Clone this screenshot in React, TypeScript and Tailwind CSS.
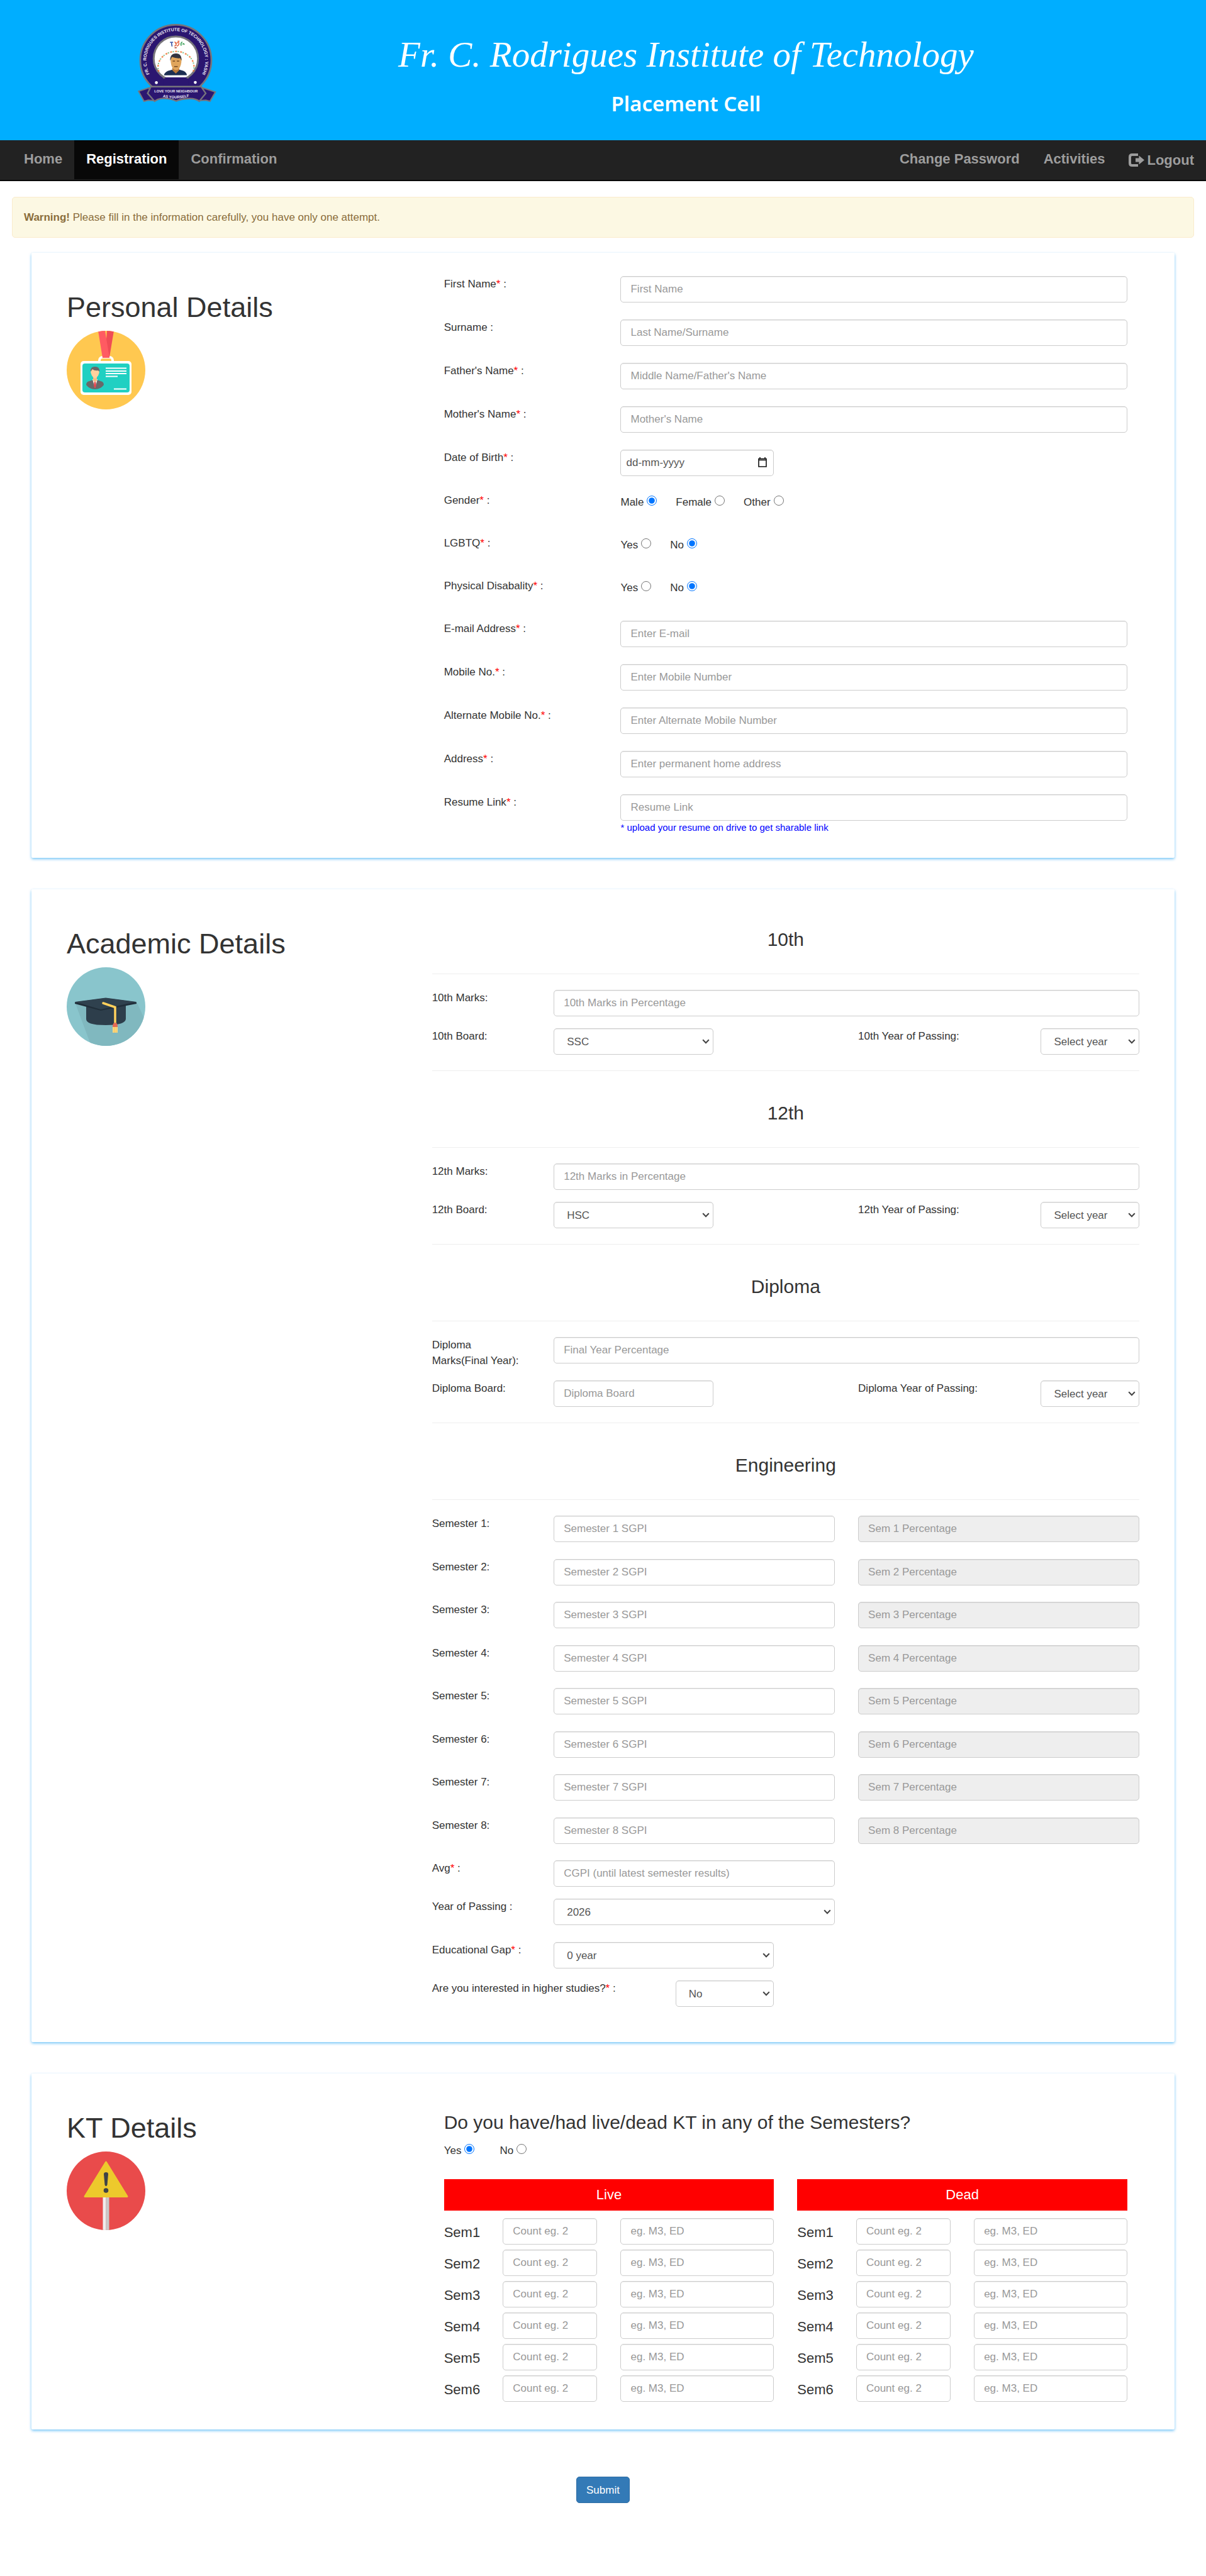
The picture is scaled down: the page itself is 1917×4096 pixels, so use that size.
import type { ReactNode } from "react";

const CONTROL =
  "block h-[42px] w-full rounded-[5px] border border-[#cccccc] bg-white px-[15px] text-[17px] leading-[25px] text-[#555555] shadow-[inset_0_1px_1px_rgba(0,0,0,0.075)] outline-none placeholder:text-[#999999] disabled:bg-[#eeeeee]";

function Req() {
  return <span className="text-[#ff0000]">*</span>;
}

function TextInput({ id, placeholder, label, disabled }: { id?: string; placeholder: string; label?: string; disabled?: boolean }) {
  return <input id={id} type="text" aria-label={label} placeholder={placeholder} disabled={disabled} className={CONTROL} />;
}

function Select({ id, options }: { id: string; options: string[] }) {
  return (
    <div className="relative">
      <select id={id} className="block h-[42px] w-full appearance-none rounded-[5px] border border-[#cccccc] bg-white pr-[28px] pl-5 text-[17px] leading-[25px] text-[#555555] shadow-[inset_0_1px_1px_rgba(0,0,0,0.075)] outline-none">
        {options.map((o) => (
          <option key={o}>{o}</option>
        ))}
      </select>
      <svg viewBox="0 0 12 8" className="pointer-events-none absolute top-[17px] right-[6px] h-2 w-3" fill="none" stroke="#444444" strokeWidth="2">
        <path d="M1.2 1.2 6 6.2l4.8-5" />
      </svg>
    </div>
  );
}

function Radios({ name, options, checked, gap }: { name: string; options: string[]; checked: string; gap: string }) {
  return (
    <div className={`flex ${gap}`}>
      {options.map((o) => (
        <label key={o} className="flex items-start gap-[5px]">
          <span>{o}</span>
          <input type="radio" name={name} defaultChecked={o === checked} className="m-0 mt-[2px] h-4 w-4 accent-[#0075ff]" />
        </label>
      ))}
    </div>
  );
}

function Logo() {
  return (
    <svg viewBox="57 52 376 376" className="h-[125px] w-[125px]" role="img" aria-label="Institute crest">
      <defs>
        <path id="crest-arc" d="M123 307 A141 141 0 1 1 355 307" />
        <path id="crest-motto" d="M176 402 Q239 416 304 400" />
      </defs>
      <circle cx="239" cy="226" r="170" fill="#2b1670" stroke="#77757c" strokeWidth="8" />
      <circle cx="239" cy="218" r="106" fill="#ffffff" stroke="#77757c" strokeWidth="9" />
      <path d="M178 308h122v40H178z" fill="#2b1670" />
      <path d="M178 310l10-2M300 310l-10-2" stroke="#77757c" strokeWidth="7" />
      <path d="M158 280a86 74 0 1 1 164 0" fill="none" stroke="#f0702f" strokeWidth="7" strokeDasharray="9 15" opacity="0.8" />
      <path d="M158 280a86 74 0 1 1 164 0" fill="none" stroke="#4faa5c" strokeWidth="6" strokeDasharray="6 18" strokeDashoffset="-12" opacity="0.7" />
      <path d="M182 298q5-20 30-24l28-8 26 8q22 4 26 23z" fill="#1d2f52" />
      <path d="M222 262v12l17 16 16-16v-12z" fill="#b97838" />
      <path d="M214 222q0-24 26-24t26 24q0 30-12 44-14 14-28 0-12-14-12-44z" fill="#e0a55c" />
      <path d="M212 228q-2-34 28-35 28 1 26 35l-6-12q-20 2-40-6z" fill="#33343f" />
      <path d="M224 230h11M244 230h11M231 256h17" stroke="#5e3717" strokeWidth="4" />
      <path d="M211 140h15m-8 0 3 20" stroke="#3a55a8" strokeWidth="5" fill="none" />
      <path d="M232 139q10 0 6 8 8 8-6 11m10-12q10-12 12-2 0 12-10 14m4-25q4 4 8 0" stroke="#e2552f" strokeWidth="4" fill="none" />
      <path d="M270 138q-10 6-5 18m6-6q6-8 8 2" stroke="#3da05a" strokeWidth="5" fill="none" />
      <path d="M233 166h10" stroke="#b04b3a" strokeWidth="5" />
      <circle cx="146" cy="333" r="7" fill="#ffffff" />
      <circle cx="332" cy="332" r="7" fill="#ffffff" />
      <path d="M110 358 61 374l26 48 20-5 30 2zM368 358l60 20-26 44-20-5-30 2z" fill="#2b1670" stroke="#77757c" strokeWidth="6" />
      <path d="M120 352h240l22 32-31 38q-20-16-60-12-30 2-50 11-24-12-58-13-26 0-46 14l-33-38z" fill="#2b1670" stroke="#77757c" strokeWidth="7" />
      <g fill="#eceaf5" fontFamily="Liberation Sans" fontWeight="700">
        <text fontSize="21">
          <textPath href="#crest-arc" startOffset="50%" textAnchor="middle">
            FR. C. RODRIGUES INSTITUTE OF TECHNOLOGY : VASHI
          </textPath>
        </text>
        <text x="240" y="381" fontSize="17" textAnchor="middle">
          LOVE YOUR NEIGHBOUR
        </text>
        <text fontSize="18">
          <textPath href="#crest-motto" startOffset="50%" textAnchor="middle">
            AS YOURSELF
          </textPath>
        </text>
      </g>
    </svg>
  );
}

function BadgeIcon() {
  return (
    <svg viewBox="0 0 125 125" className="h-[125px] w-[125px]" aria-hidden="true">
      <defs>
        <clipPath id="badge-clip">
          <circle cx="62.5" cy="62.5" r="62.5" />
        </clipPath>
      </defs>
      <g clipPath="url(#badge-clip)">
        <path d="M0 0h125v125H0z" fill="#ffc850" />
        <rect x="52" y="42" width="21" height="16" rx="5" fill="none" stroke="#ffffff" strokeWidth="4" />
        <path d="M64 0h11l-7 42h-7z" fill="#f04c55" />
        <path d="M50 0h11l7 43H57z" fill="#ff5b62" />
        <rect x="22" y="48" width="81" height="54" rx="5" fill="#ffffff" />
        <rect x="25" y="52" width="75" height="46" rx="4" fill="#20d0c2" />
        <path d="M62 59.5h33M62 64h33M62 68h33M62 72.5h19M75 92.5h20" stroke="#ffffff" strokeWidth="2" />
        <path d="M31 86q0-5 5-6l9-3 9 3q5 1 5 6-5 7-14 7t-14-7z" fill="#696969" />
        <path d="m41 77 4 14 4-14z" fill="#ffffff" />
        <path d="m44 79-1 9 2 3 2-3-1-9z" fill="#e4474f" />
        <path d="M42 73h6v6l-3 3-3-3z" fill="#f3bd83" />
        <path d="M38 63q0-5 7-5t7 5q0 9-7 13-7-4-7-13z" fill="#ffd19d" />
        <path d="M38 65q-1-8 7-8t7 8l-2-2q-6 1-9-2z" fill="#696969" />
      </g>
    </svg>
  );
}

function CapIcon() {
  return (
    <svg viewBox="0 0 125 125" className="h-[125px] w-[125px]" aria-hidden="true">
      <defs>
        <clipPath id="cap-clip">
          <circle cx="62.5" cy="62.5" r="62.5" />
        </clipPath>
      </defs>
      <g clipPath="url(#cap-clip)">
        <path d="M0 0h125v125H0z" fill="#89c5cc" />
        <path d="M14 58 39 125h86V85l-13-28z" fill="#80b8bf" />
        <path d="M31 58h63v24q0 10-32 10T31 82z" fill="#2d3e4b" />
        <path d="M13 55.5 62 49l49 6.5v2.5L54 69 13 58z" fill="#202e39" />
        <path d="M13 55 62 48.5 111 55 54 67z" fill="#2f414e" />
        <path d="m58 57 19 6.5V90" fill="none" stroke="#ffd15c" strokeWidth="3.5" strokeLinecap="round" />
        <path d="M73 95q0-7 4-7t4 7z" fill="#e36a55" />
        <path d="M73 95h8v9h-8z" fill="#ffd980" />
        <path d="M75.5 95v9M78.5 95v9" stroke="#f3c05a" />
      </g>
    </svg>
  );
}

function WarningIcon() {
  return (
    <svg viewBox="0 0 125 125" className="h-[125px] w-[125px]" aria-hidden="true">
      <defs>
        <clipPath id="warn-clip">
          <circle cx="62.5" cy="62.5" r="62.5" />
        </clipPath>
      </defs>
      <g clipPath="url(#warn-clip)">
        <path d="M0 0h125v125H0z" fill="#e94b4b" />
        <path d="M57.5 70h5v55h-5z" fill="#eeeeee" />
        <path d="M62.5 70h5v55h-5z" fill="#c9c9c9" />
        <path d="M62.5 17 96 71.5H29z" fill="#edc92c" stroke="#edc92c" strokeWidth="3" strokeLinejoin="round" />
        <path d="M59 36q0-3 3.5-3t3.5 3l-1.5 17q-.5 2-2 2t-2-2z" fill="#3e4347" />
        <circle cx="62.5" cy="62" r="3.8" fill="#3e4347" />
      </g>
    </svg>
  );
}

function Card({ title, icon, children }: { title: string; icon: ReactNode; children: ReactNode }) {
  return (
    <section className="mx-[50px] grid grid-cols-12 gap-x-[37px] rounded-[2px] bg-white px-14 shadow-[0_2px_4px_rgba(0,150,240,0.55)]">
      <div className="col-span-4 pt-[62px]">
        <h1 className="mb-3 text-[45px] leading-[50px]">{title}</h1>
        {icon}
      </div>
      <div className="col-span-8">{children}</div>
    </section>
  );
}

function PersonalRow({ id, label, required = true, placeholder }: { id: string; label: string; required?: boolean; placeholder: string }) {
  return (
    <div className="grid grid-cols-12 gap-x-[37px]">
      <label htmlFor={id} className="col-span-3">
        {label}
        {required && <Req />} :
      </label>
      <div className="col-span-9">
        <TextInput id={id} placeholder={placeholder} />
      </div>
    </div>
  );
}

function RadioRow({ label, name, options, checked }: { label: string; name: string; options: string[]; checked: string }) {
  return (
    <div role="radiogroup" aria-label={label} className="grid h-[41px] grid-cols-12 gap-x-[37px]">
      <span className="col-span-3">
        {label}
        <Req /> :
      </span>
      <div className="col-span-9 pt-[3px]">
        <Radios name={name} options={options} checked={checked} gap="gap-[30px]" />
      </div>
    </div>
  );
}

function Rule() {
  return <hr className="border-0 border-t border-[#eeeeee]" />;
}

function SchoolSection({ title, prefix, marksLabel, marksPlaceholder, board }: { title: string; prefix: string; marksLabel: ReactNode; marksPlaceholder: string; board: ReactNode }) {
  return (
    <>
      <h3 className="mb-[38px] text-center text-[30px] leading-[33px]">{title}</h3>
      <Rule />
      <div className="my-[25px] grid grid-cols-12 gap-x-[37px] gap-y-[19px]">
        <label htmlFor={`${prefix}-marks`} className="col-span-2">
          {marksLabel}
        </label>
        <div className="col-span-10">
          <TextInput id={`${prefix}-marks`} placeholder={marksPlaceholder} />
        </div>
        <label htmlFor={`${prefix}-board`} className="col-span-2">
          {prefix} Board:
        </label>
        <div className="col-span-3">{board}</div>
        <label htmlFor={`${prefix}-year`} className="col-span-3 col-start-8">
          {prefix} Year of Passing:
        </label>
        <div className="col-span-2">
          <Select id={`${prefix}-year`} options={["Select year", "2018", "2019", "2020", "2021", "2022"]} />
        </div>
      </div>
      <Rule />
      <div className="h-[50px]" />
    </>
  );
}

function KtTable({ title }: { title: string }) {
  return (
    <div className="col-span-6">
      <h4 className="mb-3 bg-[#ff0000] text-center text-[22px] leading-[50px] text-white">{title}</h4>
      <div className="flex flex-col gap-2">
        {[1, 2, 3, 4, 5, 6].map((n) => (
          <div key={n} className="grid grid-cols-12 gap-x-[37px]">
            <h4 className="col-span-2 pt-[10px] text-[22px] leading-[25px] whitespace-nowrap">Sem{n}</h4>
            <div className="col-span-4">
              <TextInput label={`${title} KT count, semester ${n}`} placeholder="Count eg. 2" />
            </div>
            <div className="col-span-6">
              <TextInput label={`${title} KT subjects, semester ${n}`} placeholder="eg. M3, ED" />
            </div>
          </div>
        ))}
      </div>
    </div>
  );
}

const NAV = "block px-[19px] pt-[17px] pb-[20px] leading-[25px] whitespace-nowrap";

export default function App() {
  return (
    <div className="bg-white pb-[116px] font-['Liberation_Sans',Arial,sans-serif] text-[17px] leading-[25px] text-[#333333]">
      <header className="grid grid-cols-[564fr_1054fr_300fr] bg-[#00aeff] text-white">
        <div className="flex justify-center pt-[38px] pb-[60px]">
          <Logo />
        </div>
        <div className="pt-[49px] text-center whitespace-nowrap">
          <div className="font-['Liberation_Serif',serif] text-[57px] leading-[75px] italic">Fr. C. Rodrigues Institute of Technology</div>
          <div className="mt-[18px] font-['Noto_Sans',sans-serif] text-[33px] leading-[46px] font-semibold">Placement Cell</div>
        </div>
      </header>

      <nav className="flex justify-between border-b-2 border-[#080808] bg-[#222222] pb-px pl-[19px] text-[22px] font-bold text-[#9d9d9d]">
        <ul className="flex">
          <li><a href="#home" className={NAV}>Home</a></li>
          <li><a href="#registration" aria-current="page" className={`${NAV} bg-[#080808] text-white`}>Registration</a></li>
          <li><a href="#confirmation" className={NAV}>Confirmation</a></li>
        </ul>
        <ul className="flex">
          <li><a href="#password" className={NAV}>Change Password</a></li>
          <li><a href="#activities" className={NAV}>Activities</a></li>
          <li>
            <a href="#logout" className="flex items-center gap-1 px-[19px] pt-[19px] pb-[18px] leading-[25px]">
              <svg viewBox="0 0 25 21" className="h-[21px] w-[25px]" aria-hidden="true">
                <path d="M15 2H5.500Q2 2 2 5.500v10Q2 19 5.500 19H15" fill="none" stroke="currentColor" strokeWidth="4" />
                <path d="M11 7.500H16.500V3.500l8.500 7-8.500 7V13.500H11z" fill="currentColor" />
              </svg>
              Logout
            </a>
          </li>
        </ul>
      </nav>

      <div role="alert" className="mx-[19px] mt-[25px] rounded-[5px] border border-[#faebcc] bg-[#fcf8e3] px-[18px] py-[19px] text-[#8a6d3b]">
        <strong>Warning!</strong> Please fill in the information carefully, you have only one attempt.
      </div>

      <form className="mt-6 flex flex-col gap-[50px]">
        <Card title="Personal Details" icon={<BadgeIcon />}>
          <div className="flex flex-col gap-[27px] px-[19px] py-[37px]">
            <PersonalRow id="first" label="First Name" placeholder="First Name" />
            <PersonalRow id="surname" label="Surname" required={false} placeholder="Last Name/Surname" />
            <PersonalRow id="father" label="Father's Name" placeholder="Middle Name/Father's Name" />
            <PersonalRow id="mother" label="Mother's Name" placeholder="Mother's Name" />
            <div className="grid h-[41px] grid-cols-12 gap-x-[37px]">
              <label htmlFor="dob" className="col-span-3">
                Date of Birth
                <Req /> :
              </label>
              <div className="relative col-span-3">
                <input id="dob" type="text" placeholder="dd-mm-yyyy" className="block h-[42px] w-full rounded-[5px] border border-[#cccccc] bg-white pr-10 pl-[8px] text-[17px] text-[#555555] shadow-[inset_0_1px_1px_rgba(0,0,0,0.075)] outline-none placeholder:text-[#555555]" />
                <button type="button" aria-label="Open calendar" className="absolute top-[12px] right-[11px]">
                  <svg viewBox="0 0 14 16" className="h-4 w-[14px]" aria-hidden="true">
                    <path d="M1 2.500h12v12.500H1zM1 4.500h12M3 0v3M11 0v3" fill="none" stroke="#111111" strokeWidth="1.600" />
                  </svg>
                </button>
              </div>
            </div>
            <RadioRow label="Gender" name="gender" options={["Male", "Female", "Other"]} checked="Male" />
            <RadioRow label="LGBTQ" name="lgbtq" options={["Yes", "No"]} checked="No" />
            <RadioRow label="Physical Disabality" name="disability" options={["Yes", "No"]} checked="No" />
            <PersonalRow id="email" label="E-mail Address" placeholder="Enter E-mail" />
            <PersonalRow id="mobile" label="Mobile No." placeholder="Enter Mobile Number" />
            <PersonalRow id="alt" label="Alternate Mobile No." placeholder="Enter Alternate Mobile Number" />
            <PersonalRow id="address" label="Address" placeholder="Enter permanent home address" />
            <div>
              <PersonalRow id="resume" label="Resume Link" placeholder="Resume Link" />
              <div className="grid grid-cols-12 gap-x-[37px] text-[15px] leading-[22px] text-[#0000ff]">
                <span className="col-span-9 col-start-4">* upload your resume on drive to get sharable link</span>
              </div>
            </div>
          </div>
        </Card>

        <Card title="Academic Details" icon={<CapIcon />}>
          <div className="pt-[63px] pb-[56px]">
            <SchoolSection title="10th" prefix="10th" marksLabel="10th Marks:" marksPlaceholder="10th Marks in Percentage" board={<Select id="10th-board" options={["SSC", "CBSE", "ICSE"]} />} />
            <SchoolSection title="12th" prefix="12th" marksLabel="12th Marks:" marksPlaceholder="12th Marks in Percentage" board={<Select id="12th-board" options={["HSC", "CBSE", "ISC"]} />} />
            <SchoolSection title="Diploma" prefix="Diploma" marksLabel={<>Diploma<br />Marks(Final Year):</>} marksPlaceholder="Final Year Percentage" board={<TextInput id="Diploma-board" placeholder="Diploma Board" />} />
            <h3 className="mb-[38px] text-center text-[30px] leading-[33px]">Engineering</h3>
            <Rule />
            <div className="mt-[25px]">
              {[1, 2, 3, 4, 5, 6, 7, 8].map((n) => (
                <div key={n} className="grid grid-cols-12 gap-x-[37px] odd:mb-[27px] even:mb-[26px]">
                  <label htmlFor={`sem-${n}`} className="col-span-2">
                    Semester {n}:
                  </label>
                  <div className="col-span-5">
                    <TextInput id={`sem-${n}`} placeholder={`Semester ${n} SGPI`} />
                  </div>
                  <div className="col-span-5">
                    <TextInput label={`Semester ${n} percentage`} placeholder={`Sem ${n} Percentage`} disabled />
                  </div>
                </div>
              ))}
            </div>
            <div className="mb-[19px] grid grid-cols-12 gap-x-[37px]">
              <label htmlFor="avg" className="col-span-2">
                Avg
                <Req /> :
              </label>
              <div className="col-span-5">
                <TextInput id="avg" placeholder="CGPI (until latest semester results)" />
              </div>
            </div>
            <div className="mb-[27px] grid grid-cols-12 gap-x-[37px]">
              <label htmlFor="passing" className="col-span-2">
                Year of Passing :
              </label>
              <div className="col-span-5">
                <Select id="passing" options={["2026", "2025", "2024"]} />
              </div>
            </div>
            <div className="mb-[19px] grid grid-cols-12 gap-x-[37px]">
              <label htmlFor="gap" className="col-span-2">
                Educational Gap
                <Req /> :
              </label>
              <div className="col-span-4">
                <Select id="gap" options={["0 year", "1 year", "2 years"]} />
              </div>
            </div>
            <div className="grid grid-cols-12 gap-x-[37px]">
              <label htmlFor="higher" className="col-span-4">
                Are you interested in higher studies?
                <Req /> :
              </label>
              <div className="col-span-2">
                <Select id="higher" options={["No", "Yes"]} />
              </div>
            </div>
          </div>
        </Card>

        <Card title="KT Details" icon={<WarningIcon />}>
          <div className="px-[19px] pt-[61px] pb-[44px]">
            <h3 className="mb-4 text-[30px] leading-[33px]">Do you have/had live/dead KT in any of the Semesters?</h3>
            <Radios name="kt" options={["Yes", "No"]} checked="Yes" gap="gap-10" />
            <div className="mt-[33px] grid grid-cols-12 gap-x-[37px]">
              <KtTable title="Live" />
              <KtTable title="Dead" />
            </div>
          </div>
        </Card>

        <div className="mt-[25px] text-center">
          <button type="submit" className="block mx-auto h-[42px] rounded-[5px] border border-[#2e6da4] bg-[#337ab7] px-[15px] text-[17px] leading-[25px] text-white">
            Submit
          </button>
        </div>
      </form>
    </div>
  );
}
